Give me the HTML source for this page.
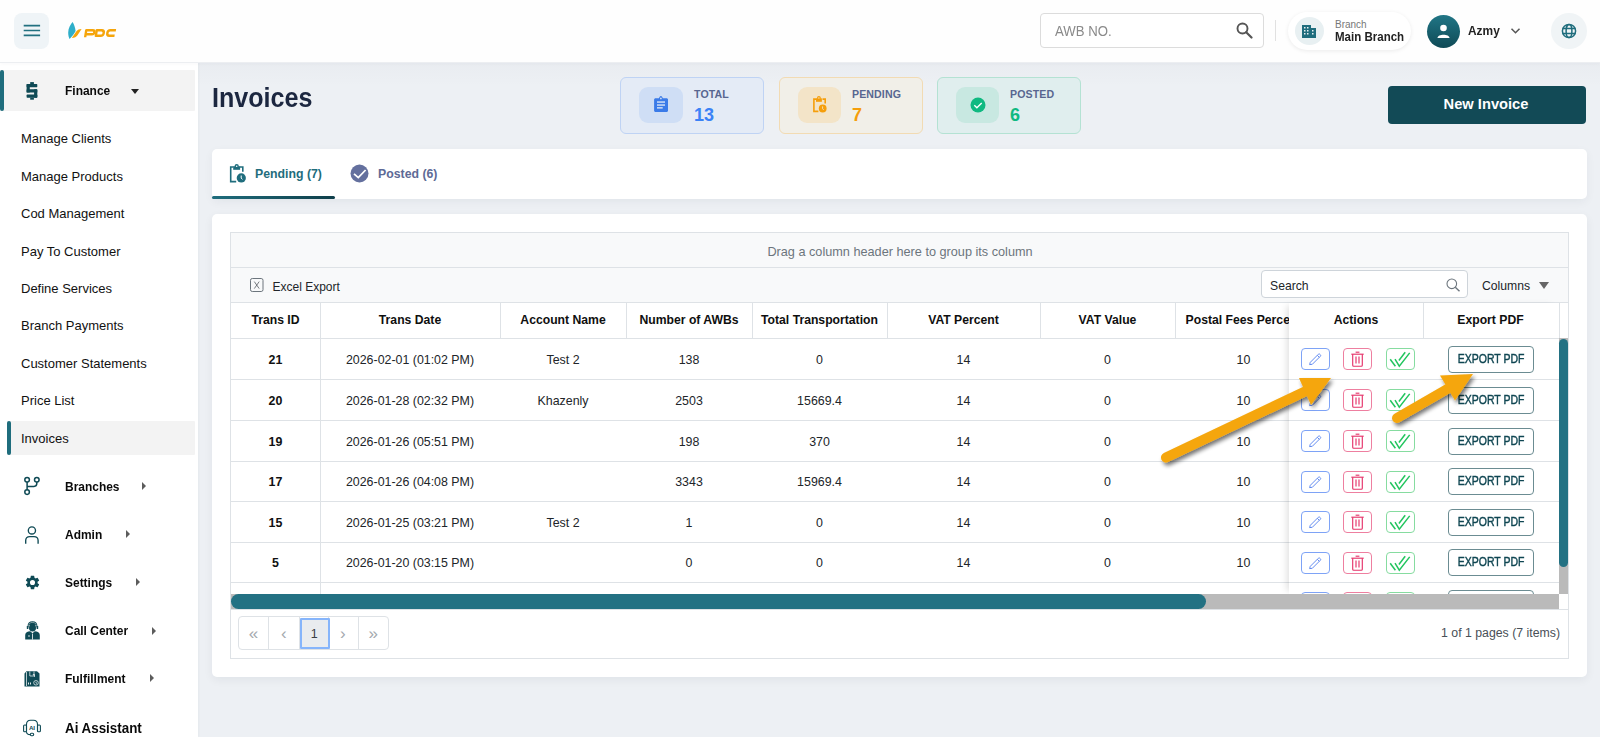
<!DOCTYPE html>
<html><head><meta charset="utf-8">
<style>
*{box-sizing:border-box;margin:0;padding:0}
html,body{width:1600px;height:737px;overflow:hidden}
body{position:relative;background:#edf0f4;font-family:"Liberation Sans",sans-serif;color:#1a1a1a}
.a{position:absolute}
.t{position:absolute;white-space:nowrap;line-height:1}
/* header */
#hdr{left:0;top:0;width:1600px;height:63px;background:#fefefe;border-bottom:1px solid #eceef1;z-index:2;box-shadow:0 1px 4px rgba(30,40,60,0.03)}
#side{left:0;top:62px;width:198px;height:675px;background:#fff;box-shadow:1px 0 2px rgba(30,40,60,0.04)}
.sub{left:21px;font-size:13px;color:#111}
.main{left:65px;font-size:13px;font-weight:700;color:#0a0a0a;transform:scaleX(0.92);transform-origin:0 0}
.tri-r{width:0;height:0;border-top:4.3px solid transparent;border-bottom:4.3px solid transparent;border-left:4.6px solid #5c5c5c}
.card{background:#fff;border-radius:5px}
.gl{background:#dee2e6}
.cell{position:absolute;white-space:nowrap;line-height:1;font-size:12.4px;color:#212529;transform:translateX(-50%)}
.hd{position:absolute;white-space:nowrap;line-height:1;font-size:12.2px;font-weight:700;color:#0f0f0f;transform:translateX(-50%)}
.bt{position:absolute;width:29px;height:22px;border-radius:4px;border:1px solid}
.exp{position:absolute;width:86px;height:27px;border-radius:4px;border:1px solid #6b8c92;color:#0f4652;font-size:12px;font-weight:400;-webkit-text-stroke:0.4px #0f4652;line-height:25px;text-align:center;letter-spacing:0}
</style></head><body>

<!-- HEADER -->
<div id="hdr" class="a">
  <div class="a" style="left:14px;top:13px;width:35px;height:36px;border-radius:8px;background:#eff4f7"></div>
  <svg class="a" style="left:0;top:0" width="60" height="60" viewBox="0 0 60 60"><path d="M23.7 25.6H40.1M23.7 30.5H40.1M23.7 35.3H40.1" stroke="#217080" stroke-width="1.7"/></svg>
  <!-- logo -->
  <svg class="a" style="left:0;top:0" width="130" height="50" viewBox="0 0 130 50">
    <path d="M72.6 22C70.5 24.5 68.3 28 68.2 32.5C68.1 35 68.8 37.5 69.6 39C71.5 37 74.5 33.5 75.6 31C75.2 27.5 74.2 24.5 72.6 22Z" fill="#2eaec9"/>
    <path d="M71.8 38C74.5 37.8 76.5 36.8 77.5 35.2L81.6 28.9C79.2 29 77.6 29.6 76.6 31Z" fill="#f5a50b"/>
    <g transform="translate(100 33) skewX(-9) translate(-100 -33)" fill="none" stroke="#f5a50b" stroke-width="2.4" stroke-linejoin="round">
      <path d="M85.8 37.2V30.2H92.3C94.9 30.2 94.9 34.3 92.3 34.3H86"/>
      <path d="M96.3 30.2H101.2C104.6 30.2 104.6 35.8 101.2 35.8H96.3Z"/>
      <path d="M115.5 30.2H109.8C106.5 30.2 106.5 35.8 109.8 35.8H115"/>
    </g>
  </svg>
  <!-- AWB -->
  <div class="a" style="left:1040px;top:13px;width:224px;height:35px;border:1px solid #dcdcdc;border-radius:4px;background:#fff"></div>
  <div class="t" style="left:1055px;top:24px;font-size:14px;color:#8a8a8a;transform:scaleX(0.94);transform-origin:0 0">AWB NO.</div>
  <svg class="a" style="left:1236px;top:22px" width="17" height="17" viewBox="0 0 17 17"><circle cx="6.5" cy="6.5" r="5" fill="none" stroke="#555" stroke-width="1.9"/><path d="M10.2 10.2 L15.5 15.5" stroke="#555" stroke-width="2.2" stroke-linecap="round"/></svg>
  <div class="a" style="left:1275px;top:20px;width:1px;height:21px;background:#e1e1e1"></div>
  <!-- branch pill -->
  <div class="a" style="left:1288px;top:12px;width:123px;height:38px;border-radius:19px;background:#fff;box-shadow:0 1px 4px rgba(0,0,0,0.08)"></div>
  <div class="a" style="left:1295px;top:17px;width:29px;height:28px;border-radius:50%;background:#e8f0f2"></div>
  <svg class="a" style="left:1302px;top:25px" width="15" height="13" viewBox="0 0 15 13"><path d="M0 0H9V3H14V13H0Z" fill="#1f6d7d"/><g fill="#e8f0f2"><rect x="2" y="2" width="1.5" height="1.5"/><rect x="5" y="2" width="1.5" height="1.5"/><rect x="2" y="5" width="1.5" height="1.5"/><rect x="5" y="5" width="1.5" height="1.5"/><rect x="2" y="8" width="1.5" height="1.5"/><rect x="5" y="8" width="1.5" height="1.5"/><rect x="10" y="5" width="1.5" height="1.5"/><rect x="10" y="8" width="1.5" height="1.5"/></g></svg>
  <div class="t" style="left:1335px;top:20px;font-size:10px;color:#777">Branch</div>
  <div class="t" style="left:1334.5px;top:31px;font-size:12.6px;font-weight:700;color:#222;transform:scaleX(0.915);transform-origin:0 0">Main Branch</div>
  <!-- avatar -->
  <div class="a" style="left:1427px;top:15px;width:33px;height:33px;border-radius:50%;background:linear-gradient(#217686,#0f4a56)"></div>
  <svg class="a" style="left:1435px;top:23px" width="17" height="17" viewBox="0 0 17 17"><circle cx="8.5" cy="5" r="3.3" fill="#fff"/><path d="M2.5 15 C2.5 10.5 14.5 10.5 14.5 15Z" fill="#fff"/></svg>
  <div class="t" style="left:1467.5px;top:25px;font-size:12.8px;font-weight:700;color:#222;transform:scaleX(0.93);transform-origin:0 0">Azmy</div>
  <svg class="a" style="left:1510px;top:27px" width="11" height="8" viewBox="0 0 11 8"><path d="M1.5 1.8 L5.5 5.8 L9.5 1.8" fill="none" stroke="#555" stroke-width="1.5"/></svg>
  <!-- globe -->
  <div class="a" style="left:1551px;top:13px;width:36px;height:36px;border-radius:50%;background:#f0f4f6"></div>
  <svg class="a" style="left:1561px;top:23px" width="16" height="16" viewBox="0 0 16 16"><g fill="none" stroke="#1f6d7d" stroke-width="1.5"><circle cx="8" cy="8" r="6.6"/><ellipse cx="8" cy="8" rx="2.9" ry="6.6"/><path d="M1.5 5.6H14.5M1.5 10.4H14.5"/></g></svg>
</div>

<!-- SIDEBAR -->
<div id="side" class="a">
  <div class="a" style="left:0;top:8px;width:195px;height:41px;background:#f3f3f3;border-radius:1px"></div>
  <div class="a" style="left:0;top:8px;width:4px;height:41px;background:#1f6d7d;border-radius:2px"></div>
  <svg class="a" style="left:0;top:-62px" width="60" height="120" viewBox="0 0 60 120"><g fill="#0f4a55"><rect x="30.2" y="82.1" width="3.7" height="2.2"/><rect x="26.6" y="84.1" width="10.7" height="3.1" rx="0.6"/><rect x="26.6" y="84.1" width="3.2" height="8.5" rx="0.6"/><rect x="26.6" y="89.3" width="10.7" height="3.3" rx="0.6"/><rect x="34.1" y="89.3" width="3.2" height="8.4" rx="0.6"/><rect x="26.6" y="94.6" width="10.7" height="3.1" rx="0.6"/><rect x="30.2" y="97.5" width="3.7" height="2.2"/></g></svg>
  <div class="t main" style="top:22px">Finance</div>
  <div class="a" style="left:131px;top:27px;width:0;height:0;border-left:4.5px solid transparent;border-right:4.5px solid transparent;border-top:5px solid #222"></div>

  <div class="t sub" style="top:70px">Manage Clients</div>
  <div class="t sub" style="top:108px">Manage Products</div>
  <div class="t sub" style="top:145px">Cod Management</div>
  <div class="t sub" style="top:183px">Pay To Customer</div>
  <div class="t sub" style="top:220px">Define Services</div>
  <div class="t sub" style="top:257px">Branch Payments</div>
  <div class="t sub" style="top:295px">Customer Statements</div>
  <div class="t sub" style="top:332px">Price List</div>
  <div class="a" style="left:7px;top:359px;width:188px;height:34px;background:#f3f3f3;border-radius:1px"></div>
  <div class="a" style="left:7px;top:359px;width:4px;height:34px;background:#1f6d7d;border-radius:2px"></div>
  <div class="t sub" style="top:370px">Invoices</div>

  <!-- Branches -->
  <svg class="a" style="left:0;top:-62px" width="60" height="737" viewBox="0 0 60 737"><g fill="none" stroke="#0f4a55" stroke-width="1.5"><circle cx="27.1" cy="479.8" r="2.3"/><circle cx="36.8" cy="479.8" r="2.3"/><circle cx="27.1" cy="492.1" r="2.3"/><path d="M27.1 482.1V489.8M27.1 486.4H34C35.8 486.4 36.8 485.4 36.8 483.6V482.1"/></g>
  <g fill="none" stroke="#0f4a55" stroke-width="1.35"><circle cx="31.9" cy="530.4" r="3.6"/><path d="M25.7 543.8V540.6C25.7 538.1 27.3 536.6 29.8 536.6H34C36.5 536.6 38.1 538.1 38.1 540.6V543.8"/></g>
  <g fill="none" stroke="#0f4a55" stroke-width="1.1"><path d="M26.5 731.5V724.5C26.5 722 28.2 720.3 30.5 720.3H33.5C35.8 720.3 37.5 722 37.5 724.5V731.5"/><rect x="23.6" y="725" width="2.9" height="6.7" rx="1"/><rect x="37.5" y="725" width="2.9" height="6.7" rx="1"/><path d="M26.5 731.7C26.5 733.5 28 734.6 30.3 734.6"/><rect x="30.3" y="733.2" width="3.4" height="2.6" rx="1.2"/></g>
  <text x="32" y="729.8" text-anchor="middle" font-family="Liberation Sans" font-size="6.2" font-weight="700" fill="#0f4a55">AI</text>
  </svg>
  <div class="t main" style="top:417.5px">Branches</div>
  <div class="a tri-r" style="left:142px;top:420px"></div>
  <div class="t main" style="top:465.5px">Admin</div>
  <div class="a tri-r" style="left:126px;top:468px"></div>
  <!-- Settings -->
  <svg class="a" style="left:24px;top:512px" width="17" height="17" viewBox="0 0 24 24"><path fill="#0f4a55" d="M19.14 12.94c.04-.3.06-.61.06-.94 0-.32-.02-.64-.07-.94l2.03-1.58a.49.49 0 0 0 .12-.61l-1.92-3.32a.49.49 0 0 0-.59-.22l-2.39.96c-.5-.38-1.03-.7-1.62-.94l-.36-2.54a.48.48 0 0 0-.48-.41h-3.840c-.24 0-.43.17-.47.41l-.36 2.54c-.59.24-1.13.57-1.62.94l-2.39-.96a.48.48 0 0 0-.59.22L2.74 8.87c-.12.21-.08.47.12.61l2.030 1.58c-.05.3-.09.63-.09.94s.02.64.07.94l-2.03 1.58a.49.49 0 0 0-.12.61l1.92 3.32c.12.22.37.29.59.22l2.39-.96c.5.38 1.03.7 1.62.94l.36 2.54c.05.24.24.41.48.41h3.84c.24 0 .44-.17.47-.41l.36-2.54c.59-.24 1.13-.56 1.62-.94l2.39.96c.22.08.47 0 .59-.22l1.92-3.32c.12-.22.07-.47-.12-.61l-2.01-1.58zM12 15.6A3.6 3.6 0 1 1 12 8.4a3.6 3.6 0 0 1 0 7.2z"/></svg>
  <div class="t main" style="top:513.5px">Settings</div>
  <div class="a tri-r" style="left:136px;top:516px"></div>
  <!-- Call Center -->
  <svg class="a" style="left:25px;top:559px" width="15" height="19" viewBox="0 0 15 19"><g fill="#0f4a55"><path d="M7.5 0.2C4.3 0.2 2.6 2.2 2.6 4.8V6.2H3.6V4.8C3.6 2.8 5.2 1.3 7.5 1.3S11.4 2.8 11.4 4.8V6.2H12.4V4.8C12.4 2.2 10.7 0.2 7.5 0.2Z"/><path d="M3.8 4.2C4.3 2.2 5.8 1.4 7.5 1.4S10.7 2.2 11.2 4.2Z"/><ellipse cx="7.5" cy="6.8" rx="3.5" ry="3.8"/><rect x="1.8" y="5" width="1.6" height="3" rx="0.6"/><rect x="11.6" y="5" width="1.6" height="3" rx="0.6"/><path d="M0.2 18.5V14.2C0.2 12.2 1.6 11 3.4 10.6L5.2 10.2L7.5 12.3L9.8 10.2L11.6 10.6C13.4 11 14.8 12.2 14.8 14.2V18.5Z"/></g><g fill="#fff"><rect x="7.1" y="12.6" width="0.8" height="6"/><rect x="3" y="14.6" width="2" height="0.8"/></g></svg>
  <div class="t main" style="top:562px">Call Center</div>
  <div class="a tri-r" style="left:152px;top:564.5px"></div>
  <!-- Fulfillment -->
  <svg class="a" style="left:24px;top:609px" width="16" height="16" viewBox="0 0 16 16"><path d="M0.5 2.5L2.5 0.3H13L15.5 2.5V15.5H0.5Z" fill="#0f4a55"/><g fill="none" stroke="#fff" stroke-width="0.7"><path d="M2.5 1V15M5.8 0.5V5H10V0.5"/><circle cx="12" cy="11.8" r="2.3"/><path d="M12 10.8V12L12.8 12.6"/><path d="M8.8 3.5H10.5V6"/></g><g fill="#fff"><rect x="4" y="11.5" width="0.9" height="2"/><rect x="6" y="11.5" width="0.9" height="2"/></g></svg>
  <div class="t main" style="top:610px">Fulfillment</div>
  <div class="a tri-r" style="left:150px;top:612px"></div>
  <div class="t main" style="top:659px;font-size:14px;transform:scaleX(0.955)">Ai Assistant</div>
</div>

<!-- MAIN -->
<div id="main">
  <div class="a" style="left:198px;top:63px;width:1402px;height:24px;background:linear-gradient(rgba(40,50,70,0.018),rgba(40,50,70,0))"></div>
  <div class="t" style="left:212px;top:85px;font-size:27px;font-weight:700;color:#1c2740;transform:scaleX(0.93);transform-origin:0 0">Invoices</div>
  <!-- stat cards -->
  <div class="a" style="left:620px;top:77px;width:144px;height:57px;border:1px solid #bfd3f4;border-radius:6px;background:#e4ebf6"></div>
  <div class="a" style="left:639px;top:87px;width:44px;height:36px;border-radius:9px;background:#cfdef5"></div>
  <svg class="a" style="left:646px;top:90px" width="30" height="30" viewBox="0 0 30 30"><path d="M9 8.3H13C13.3 7 14 6 14.9 6S16.5 7 16.8 8.3H21.1L22 9.2V21.1L21.1 22H9L8.1 21.1V9.2Z" fill="#3b7be8"/><g fill="#cfdef5"><circle cx="14.9" cy="8.4" r="0.9"/><rect x="11" y="11.3" width="8" height="1.5"/><rect x="11" y="14.3" width="8" height="1.5"/><rect x="11" y="17.1" width="5.7" height="1.5"/></g></svg>
  <div class="t" style="left:694px;top:89px;font-size:10.6px;font-weight:700;color:#586690;letter-spacing:0.1px">TOTAL</div>
  <div class="t" style="left:694px;top:106px;font-size:18px;font-weight:700;color:#3b82f6">13</div>

  <div class="a" style="left:779px;top:77px;width:144px;height:57px;border:1px solid #f2dbb3;border-radius:6px;background:#f1efe8"></div>
  <div class="a" style="left:798px;top:87px;width:43px;height:36px;border-radius:9px;background:#f3e4c8"></div>
  <svg class="a" style="left:805px;top:90px" width="30" height="30" viewBox="0 0 30 30"><g fill="none" stroke="#f59e0b" stroke-width="1.6"><path d="M11.5 9.1H8.9V21.4H13.4"/><path d="M17.5 9.1H20.2V13.6"/></g><path d="M11 8.3H16.9V11.8H11Z" fill="#f59e0b"/><circle cx="13.9" cy="7.8" r="1.9" fill="#f59e0b"/><circle cx="13.9" cy="8" r="0.7" fill="#f3e4c8"/><circle cx="17.7" cy="18.5" r="3.9" fill="#f59e0b"/><path d="M17.6 16.4V18.6L18.6 19.8" stroke="#f3e4c8" stroke-width="0.9" fill="none"/></svg>
  <div class="t" style="left:852px;top:89px;font-size:10.6px;font-weight:700;color:#586690;letter-spacing:0.1px">PENDING</div>
  <div class="t" style="left:852px;top:106px;font-size:18px;font-weight:700;color:#f59e0b">7</div>

  <div class="a" style="left:937px;top:77px;width:144px;height:57px;border:1px solid #b4e2d3;border-radius:6px;background:#e0eeee"></div>
  <div class="a" style="left:956px;top:87px;width:43px;height:36px;border-radius:9px;background:#c8e8e1"></div>
  <svg class="a" style="left:970px;top:97px" width="16" height="16" viewBox="0 0 16 16"><circle cx="8" cy="8" r="7.5" fill="#10b981"/><path d="M4.3 8.3L6.9 10.8L11.7 6" fill="none" stroke="#fff" stroke-width="1.35"/></svg>
  <div class="t" style="left:1010px;top:89px;font-size:10.6px;font-weight:700;color:#586690;letter-spacing:0.1px">POSTED</div>
  <div class="t" style="left:1010px;top:106px;font-size:18px;font-weight:700;color:#10b981">6</div>

  <!-- new invoice -->
  <div class="a" style="left:1388px;top:86px;width:198px;height:38px;border-radius:4px;background:#124a56"></div>
  <div class="t" style="left:1387px;width:198px;text-align:center;top:97px;font-size:14.7px;font-weight:700;color:#fff">New Invoice</div>

  <!-- tabs card -->
  <div class="a card" style="left:212px;top:149px;width:1375px;height:50px;box-shadow:0 3px 10px rgba(20,30,50,0.05)"></div>
  <div class="a" style="left:212px;top:196px;width:123px;height:3px;border-radius:2px;background:linear-gradient(90deg,#1f6d7d,#0f3f4a)"></div>
  <svg class="a" style="left:222px;top:158px" width="30" height="30" viewBox="0 0 30 30"><g fill="none" stroke="#1f6d7d" stroke-width="1.6"><path d="M11.5 9H8.7V23.6H14.2"/><path d="M17.8 9H20.8V13.8"/></g><path d="M11.2 8.2H18.1V11.8H11.2Z" fill="#1f6d7d"/><circle cx="14.7" cy="8" r="2.1" fill="#1f6d7d"/><circle cx="14.7" cy="8.2" r="0.8" fill="#fff"/><circle cx="19.3" cy="19.9" r="4.6" fill="#1f6d7d"/><path d="M19.2 17.5V20.1L20.4 21.4" stroke="#fff" stroke-width="1" fill="none"/></svg>
  <div class="t" style="left:255px;top:168px;font-size:12.3px;font-weight:700;color:#1f6d7d">Pending (7)</div>
  <svg class="a" style="left:350px;top:164px" width="19" height="19" viewBox="0 0 19 19"><circle cx="9.5" cy="9.5" r="9" fill="#64709e"/><path d="M4 9.9L8.3 13.6L15.6 6" fill="none" stroke="#fff" stroke-width="1.8"/></svg>
  <div class="t" style="left:378px;top:168px;font-size:12.3px;font-weight:700;color:#5e6a96">Posted (6)</div>

  <!-- grid card -->
  <div class="a card" style="left:212px;top:214px;width:1375px;height:463px;box-shadow:0 3px 10px rgba(20,30,50,0.06)"></div>
  <!--GRID-->
<div class="a" style="left:230px;top:232px;width:1339px;height:427px;border:1px solid #dee2e6;background:#fff"></div>
<div class="a" style="left:231px;top:233px;width:1337px;height:34px;background:#f8f9fa"></div>
<div class="a gl" style="left:231px;top:267px;width:1337px;height:1px"></div>
<div class="t" style="left:900px;top:246px;font-size:12.7px;color:#6c757d;transform:translateX(-50%)">Drag a column header here to group its column</div>
<div class="a" style="left:231px;top:268px;width:1337px;height:34px;background:#f8f9fa"></div>
<div class="a gl" style="left:231px;top:302px;width:1337px;height:1px"></div>
<svg class="a" style="left:249px;top:277px" width="16" height="16" viewBox="0 0 16 16"><rect x="1.5" y="1.5" width="12.5" height="13" rx="1.8" fill="none" stroke="#6c757d" stroke-width="1"/><path d="M5.3 4.6L10.2 11.6M10.2 4.6L5.3 11.6" stroke="#555b61" stroke-width="0.8"/></svg>
<div class="t" style="left:272.5px;top:281px;font-size:12px;color:#212529">Excel Export</div>
<div class="a" style="left:1261px;top:270px;width:207px;height:28px;border:1px solid #ced4da;border-radius:4px;background:#fff"></div>
<div class="t" style="left:1270px;top:280px;font-size:12.2px;color:#212529">Search</div>
<svg class="a" style="left:1446px;top:278px" width="15" height="14" viewBox="0 0 15 14"><circle cx="5.8" cy="5.8" r="4.8" fill="none" stroke="#6c757d" stroke-width="1.1"/><path d="M9.3 9.3L13.5 13.3" stroke="#6c757d" stroke-width="1.4"/></svg>
<div class="t" style="left:1482px;top:280px;font-size:12.2px;color:#212529">Columns</div>
<div class="a" style="left:1539px;top:282px;width:0;height:0;border-left:5.5px solid transparent;border-right:5.5px solid transparent;border-top:7px solid #666"></div>
<div class="hd" style="left:275.5px;top:314px">Trans ID</div>
<div class="hd" style="left:410.0px;top:314px">Trans Date</div>
<div class="hd" style="left:563.0px;top:314px">Account Name</div>
<div class="hd" style="left:689.0px;top:314px">Number of AWBs</div>
<div class="hd" style="left:819.5px;top:314px">Total Transportation</div>
<div class="hd" style="left:963.5px;top:314px">VAT Percent</div>
<div class="hd" style="left:1107.5px;top:314px">VAT Value</div>
<div class="hd" style="left:1243.5px;top:314px">Postal Fees Percent</div>
<div class="a gl" style="left:320px;top:303px;width:1px;height:35px"></div>
<div class="a gl" style="left:500px;top:303px;width:1px;height:35px"></div>
<div class="a gl" style="left:626px;top:303px;width:1px;height:35px"></div>
<div class="a gl" style="left:752px;top:303px;width:1px;height:35px"></div>
<div class="a gl" style="left:887px;top:303px;width:1px;height:35px"></div>
<div class="a gl" style="left:1040px;top:303px;width:1px;height:35px"></div>
<div class="a gl" style="left:1175px;top:303px;width:1px;height:35px"></div>
<div class="a gl" style="left:231px;top:338px;width:1328px;height:1px"></div>
<div class="cell" style="left:275.5px;top:353.9px;font-weight:700;color:#111;">21</div>
<div class="cell" style="left:410.0px;top:353.9px;">2026-02-01 (01:02 PM)</div>
<div class="cell" style="left:563.0px;top:353.9px;">Test 2</div>
<div class="cell" style="left:689.0px;top:353.9px;">138</div>
<div class="cell" style="left:819.5px;top:353.9px;">0</div>
<div class="cell" style="left:963.5px;top:353.9px;">14</div>
<div class="cell" style="left:1107.5px;top:353.9px;">0</div>
<div class="cell" style="left:1243.5px;top:353.9px;">10</div>
<div class="a gl" style="left:231px;top:379px;width:1328px;height:1px"></div>
<div class="cell" style="left:275.5px;top:394.9px;font-weight:700;color:#111;">20</div>
<div class="cell" style="left:410.0px;top:394.9px;">2026-01-28 (02:32 PM)</div>
<div class="cell" style="left:563.0px;top:394.9px;">Khazenly</div>
<div class="cell" style="left:689.0px;top:394.9px;">2503</div>
<div class="cell" style="left:819.5px;top:394.9px;">15669.4</div>
<div class="cell" style="left:963.5px;top:394.9px;">14</div>
<div class="cell" style="left:1107.5px;top:394.9px;">0</div>
<div class="cell" style="left:1243.5px;top:394.9px;">10</div>
<div class="a gl" style="left:231px;top:420px;width:1328px;height:1px"></div>
<div class="cell" style="left:275.5px;top:435.9px;font-weight:700;color:#111;">19</div>
<div class="cell" style="left:410.0px;top:435.9px;">2026-01-26 (05:51 PM)</div>
<div class="cell" style="left:689.0px;top:435.9px;">198</div>
<div class="cell" style="left:819.5px;top:435.9px;">370</div>
<div class="cell" style="left:963.5px;top:435.9px;">14</div>
<div class="cell" style="left:1107.5px;top:435.9px;">0</div>
<div class="cell" style="left:1243.5px;top:435.9px;">10</div>
<div class="a gl" style="left:231px;top:461px;width:1328px;height:1px"></div>
<div class="cell" style="left:275.5px;top:476.4px;font-weight:700;color:#111;">17</div>
<div class="cell" style="left:410.0px;top:476.4px;">2026-01-26 (04:08 PM)</div>
<div class="cell" style="left:689.0px;top:476.4px;">3343</div>
<div class="cell" style="left:819.5px;top:476.4px;">15969.4</div>
<div class="cell" style="left:963.5px;top:476.4px;">14</div>
<div class="cell" style="left:1107.5px;top:476.4px;">0</div>
<div class="cell" style="left:1243.5px;top:476.4px;">10</div>
<div class="a gl" style="left:231px;top:501px;width:1328px;height:1px"></div>
<div class="cell" style="left:275.5px;top:516.9px;font-weight:700;color:#111;">15</div>
<div class="cell" style="left:410.0px;top:516.9px;">2026-01-25 (03:21 PM)</div>
<div class="cell" style="left:563.0px;top:516.9px;">Test 2</div>
<div class="cell" style="left:689.0px;top:516.9px;">1</div>
<div class="cell" style="left:819.5px;top:516.9px;">0</div>
<div class="cell" style="left:963.5px;top:516.9px;">14</div>
<div class="cell" style="left:1107.5px;top:516.9px;">0</div>
<div class="cell" style="left:1243.5px;top:516.9px;">10</div>
<div class="a gl" style="left:231px;top:542px;width:1328px;height:1px"></div>
<div class="cell" style="left:275.5px;top:557.4px;font-weight:700;color:#111;">5</div>
<div class="cell" style="left:410.0px;top:557.4px;">2026-01-20 (03:15 PM)</div>
<div class="cell" style="left:689.0px;top:557.4px;">0</div>
<div class="cell" style="left:819.5px;top:557.4px;">0</div>
<div class="cell" style="left:963.5px;top:557.4px;">14</div>
<div class="cell" style="left:1107.5px;top:557.4px;">0</div>
<div class="cell" style="left:1243.5px;top:557.4px;">10</div>
<div class="a gl" style="left:231px;top:582px;width:1328px;height:1px"></div>
<div class="a gl" style="left:320px;top:339px;width:1px;height:255px"></div>
<div class="a" style="left:1289px;top:303px;width:270px;height:291px;background:#fff;box-shadow:-5px 0 7px -3px rgba(0,0,0,0.13)"></div>
<div class="a gl" style="left:1289px;top:338px;width:270px;height:1px"></div>
<div class="a gl" style="left:1423px;top:303px;width:1px;height:35px"></div>
<div class="a gl" style="left:1559px;top:303px;width:1px;height:35px"></div>
<div class="hd" style="left:1356px;top:314px">Actions</div>
<div class="hd" style="left:1490.5px;top:314px">Export PDF</div>
<div class="bt" style="left:1301px;top:348.0px;border-color:#7ea3f6"><svg width="29" height="22" viewBox="0 0 29 22" style="position:absolute;left:-1px;top:-1px"><path d="M8.6 16.6L9.3 14.3L17.3 6.3C17.8 5.8 18.4 5.8 18.9 6.3L19.3 6.7C19.8 7.2 19.8 7.8 19.3 8.3L11.3 16.3Z M16.3 7.3L18.3 9.3" fill="none" stroke="#5b86ef" stroke-width="0.95" stroke-linejoin="round"/></svg></div>
<div class="bt" style="left:1343px;top:348.0px;border-color:#ee7fa0"><svg width="29" height="22" viewBox="0 0 29 22" style="position:absolute;left:-1px;top:-1px"><g fill="none" stroke="#e5336a" stroke-width="1.15"><path d="M8.3 6.2H20.7"/><path d="M12.6 4.2H16.4"/><path d="M9.7 6.2V17.2C9.7 17.8 10.1 18.2 10.7 18.2H18.3C18.9 18.2 19.3 17.8 19.3 17.2V6.2"/><path d="M13 8.6V15.6M16 8.6V15.6"/></g></svg></div>
<div class="bt" style="left:1385.5px;top:348.0px;border-color:#86dca0"><svg width="29" height="22" viewBox="0 0 29 22" style="position:absolute;left:-1px;top:-1px"><g fill="none" stroke="#22c55e" stroke-width="1.5"><path d="M4.2 11.2L9.4 18.2"/><path d="M12.9 12.5L19.2 4.3"/><path d="M9 11.2L13.3 18.2L23.7 4.9"/></g></svg></div>
<div class="exp" style="left:1448px;top:345.6px"><span style="display:inline-block;transform:scaleX(0.875)">EXPORT PDF</span></div>
<div class="a gl" style="left:1289px;top:379px;width:270px;height:1px"></div>
<div class="bt" style="left:1301px;top:389.0px;border-color:#7ea3f6"><svg width="29" height="22" viewBox="0 0 29 22" style="position:absolute;left:-1px;top:-1px"><path d="M8.6 16.6L9.3 14.3L17.3 6.3C17.8 5.8 18.4 5.8 18.9 6.3L19.3 6.7C19.8 7.2 19.8 7.8 19.3 8.3L11.3 16.3Z M16.3 7.3L18.3 9.3" fill="none" stroke="#5b86ef" stroke-width="0.95" stroke-linejoin="round"/></svg></div>
<div class="bt" style="left:1343px;top:389.0px;border-color:#ee7fa0"><svg width="29" height="22" viewBox="0 0 29 22" style="position:absolute;left:-1px;top:-1px"><g fill="none" stroke="#e5336a" stroke-width="1.15"><path d="M8.3 6.2H20.7"/><path d="M12.6 4.2H16.4"/><path d="M9.7 6.2V17.2C9.7 17.8 10.1 18.2 10.7 18.2H18.3C18.9 18.2 19.3 17.8 19.3 17.2V6.2"/><path d="M13 8.6V15.6M16 8.6V15.6"/></g></svg></div>
<div class="bt" style="left:1385.5px;top:389.0px;border-color:#86dca0"><svg width="29" height="22" viewBox="0 0 29 22" style="position:absolute;left:-1px;top:-1px"><g fill="none" stroke="#22c55e" stroke-width="1.5"><path d="M4.2 11.2L9.4 18.2"/><path d="M12.9 12.5L19.2 4.3"/><path d="M9 11.2L13.3 18.2L23.7 4.9"/></g></svg></div>
<div class="exp" style="left:1448px;top:386.6px"><span style="display:inline-block;transform:scaleX(0.875)">EXPORT PDF</span></div>
<div class="a gl" style="left:1289px;top:420px;width:270px;height:1px"></div>
<div class="bt" style="left:1301px;top:430.0px;border-color:#7ea3f6"><svg width="29" height="22" viewBox="0 0 29 22" style="position:absolute;left:-1px;top:-1px"><path d="M8.6 16.6L9.3 14.3L17.3 6.3C17.8 5.8 18.4 5.8 18.9 6.3L19.3 6.7C19.8 7.2 19.8 7.8 19.3 8.3L11.3 16.3Z M16.3 7.3L18.3 9.3" fill="none" stroke="#5b86ef" stroke-width="0.95" stroke-linejoin="round"/></svg></div>
<div class="bt" style="left:1343px;top:430.0px;border-color:#ee7fa0"><svg width="29" height="22" viewBox="0 0 29 22" style="position:absolute;left:-1px;top:-1px"><g fill="none" stroke="#e5336a" stroke-width="1.15"><path d="M8.3 6.2H20.7"/><path d="M12.6 4.2H16.4"/><path d="M9.7 6.2V17.2C9.7 17.8 10.1 18.2 10.7 18.2H18.3C18.9 18.2 19.3 17.8 19.3 17.2V6.2"/><path d="M13 8.6V15.6M16 8.6V15.6"/></g></svg></div>
<div class="bt" style="left:1385.5px;top:430.0px;border-color:#86dca0"><svg width="29" height="22" viewBox="0 0 29 22" style="position:absolute;left:-1px;top:-1px"><g fill="none" stroke="#22c55e" stroke-width="1.5"><path d="M4.2 11.2L9.4 18.2"/><path d="M12.9 12.5L19.2 4.3"/><path d="M9 11.2L13.3 18.2L23.7 4.9"/></g></svg></div>
<div class="exp" style="left:1448px;top:427.6px"><span style="display:inline-block;transform:scaleX(0.875)">EXPORT PDF</span></div>
<div class="a gl" style="left:1289px;top:461px;width:270px;height:1px"></div>
<div class="bt" style="left:1301px;top:470.5px;border-color:#7ea3f6"><svg width="29" height="22" viewBox="0 0 29 22" style="position:absolute;left:-1px;top:-1px"><path d="M8.6 16.6L9.3 14.3L17.3 6.3C17.8 5.8 18.4 5.8 18.9 6.3L19.3 6.7C19.8 7.2 19.8 7.8 19.3 8.3L11.3 16.3Z M16.3 7.3L18.3 9.3" fill="none" stroke="#5b86ef" stroke-width="0.95" stroke-linejoin="round"/></svg></div>
<div class="bt" style="left:1343px;top:470.5px;border-color:#ee7fa0"><svg width="29" height="22" viewBox="0 0 29 22" style="position:absolute;left:-1px;top:-1px"><g fill="none" stroke="#e5336a" stroke-width="1.15"><path d="M8.3 6.2H20.7"/><path d="M12.6 4.2H16.4"/><path d="M9.7 6.2V17.2C9.7 17.8 10.1 18.2 10.7 18.2H18.3C18.9 18.2 19.3 17.8 19.3 17.2V6.2"/><path d="M13 8.6V15.6M16 8.6V15.6"/></g></svg></div>
<div class="bt" style="left:1385.5px;top:470.5px;border-color:#86dca0"><svg width="29" height="22" viewBox="0 0 29 22" style="position:absolute;left:-1px;top:-1px"><g fill="none" stroke="#22c55e" stroke-width="1.5"><path d="M4.2 11.2L9.4 18.2"/><path d="M12.9 12.5L19.2 4.3"/><path d="M9 11.2L13.3 18.2L23.7 4.9"/></g></svg></div>
<div class="exp" style="left:1448px;top:468.1px"><span style="display:inline-block;transform:scaleX(0.875)">EXPORT PDF</span></div>
<div class="a gl" style="left:1289px;top:501px;width:270px;height:1px"></div>
<div class="bt" style="left:1301px;top:511.0px;border-color:#7ea3f6"><svg width="29" height="22" viewBox="0 0 29 22" style="position:absolute;left:-1px;top:-1px"><path d="M8.6 16.6L9.3 14.3L17.3 6.3C17.8 5.8 18.4 5.8 18.9 6.3L19.3 6.7C19.8 7.2 19.8 7.8 19.3 8.3L11.3 16.3Z M16.3 7.3L18.3 9.3" fill="none" stroke="#5b86ef" stroke-width="0.95" stroke-linejoin="round"/></svg></div>
<div class="bt" style="left:1343px;top:511.0px;border-color:#ee7fa0"><svg width="29" height="22" viewBox="0 0 29 22" style="position:absolute;left:-1px;top:-1px"><g fill="none" stroke="#e5336a" stroke-width="1.15"><path d="M8.3 6.2H20.7"/><path d="M12.6 4.2H16.4"/><path d="M9.7 6.2V17.2C9.7 17.8 10.1 18.2 10.7 18.2H18.3C18.9 18.2 19.3 17.8 19.3 17.2V6.2"/><path d="M13 8.6V15.6M16 8.6V15.6"/></g></svg></div>
<div class="bt" style="left:1385.5px;top:511.0px;border-color:#86dca0"><svg width="29" height="22" viewBox="0 0 29 22" style="position:absolute;left:-1px;top:-1px"><g fill="none" stroke="#22c55e" stroke-width="1.5"><path d="M4.2 11.2L9.4 18.2"/><path d="M12.9 12.5L19.2 4.3"/><path d="M9 11.2L13.3 18.2L23.7 4.9"/></g></svg></div>
<div class="exp" style="left:1448px;top:508.6px"><span style="display:inline-block;transform:scaleX(0.875)">EXPORT PDF</span></div>
<div class="a gl" style="left:1289px;top:542px;width:270px;height:1px"></div>
<div class="bt" style="left:1301px;top:551.5px;border-color:#7ea3f6"><svg width="29" height="22" viewBox="0 0 29 22" style="position:absolute;left:-1px;top:-1px"><path d="M8.6 16.6L9.3 14.3L17.3 6.3C17.8 5.8 18.4 5.8 18.9 6.3L19.3 6.7C19.8 7.2 19.8 7.8 19.3 8.3L11.3 16.3Z M16.3 7.3L18.3 9.3" fill="none" stroke="#5b86ef" stroke-width="0.95" stroke-linejoin="round"/></svg></div>
<div class="bt" style="left:1343px;top:551.5px;border-color:#ee7fa0"><svg width="29" height="22" viewBox="0 0 29 22" style="position:absolute;left:-1px;top:-1px"><g fill="none" stroke="#e5336a" stroke-width="1.15"><path d="M8.3 6.2H20.7"/><path d="M12.6 4.2H16.4"/><path d="M9.7 6.2V17.2C9.7 17.8 10.1 18.2 10.7 18.2H18.3C18.9 18.2 19.3 17.8 19.3 17.2V6.2"/><path d="M13 8.6V15.6M16 8.6V15.6"/></g></svg></div>
<div class="bt" style="left:1385.5px;top:551.5px;border-color:#86dca0"><svg width="29" height="22" viewBox="0 0 29 22" style="position:absolute;left:-1px;top:-1px"><g fill="none" stroke="#22c55e" stroke-width="1.5"><path d="M4.2 11.2L9.4 18.2"/><path d="M12.9 12.5L19.2 4.3"/><path d="M9 11.2L13.3 18.2L23.7 4.9"/></g></svg></div>
<div class="exp" style="left:1448px;top:549.1px"><span style="display:inline-block;transform:scaleX(0.875)">EXPORT PDF</span></div>
<div class="a gl" style="left:1289px;top:582px;width:270px;height:1px"></div>
<div class="bt" style="left:1301px;top:591.9px;border-color:#7ea3f6"><svg width="29" height="22" viewBox="0 0 29 22" style="position:absolute;left:-1px;top:-1px"><path d="M8.6 16.6L9.3 14.3L17.3 6.3C17.8 5.8 18.4 5.8 18.9 6.3L19.3 6.7C19.8 7.2 19.8 7.8 19.3 8.3L11.3 16.3Z M16.3 7.3L18.3 9.3" fill="none" stroke="#5b86ef" stroke-width="0.95" stroke-linejoin="round"/></svg></div>
<div class="bt" style="left:1343px;top:591.9px;border-color:#ee7fa0"><svg width="29" height="22" viewBox="0 0 29 22" style="position:absolute;left:-1px;top:-1px"><g fill="none" stroke="#e5336a" stroke-width="1.15"><path d="M8.3 6.2H20.7"/><path d="M12.6 4.2H16.4"/><path d="M9.7 6.2V17.2C9.7 17.8 10.1 18.2 10.7 18.2H18.3C18.9 18.2 19.3 17.8 19.3 17.2V6.2"/><path d="M13 8.6V15.6M16 8.6V15.6"/></g></svg></div>
<div class="bt" style="left:1385.5px;top:591.9px;border-color:#86dca0"><svg width="29" height="22" viewBox="0 0 29 22" style="position:absolute;left:-1px;top:-1px"><g fill="none" stroke="#22c55e" stroke-width="1.5"><path d="M4.2 11.2L9.4 18.2"/><path d="M12.9 12.5L19.2 4.3"/><path d="M9 11.2L13.3 18.2L23.7 4.9"/></g></svg></div>
<div class="exp" style="left:1448px;top:589.5px"><span style="display:inline-block;transform:scaleX(0.875)">EXPORT PDF</span></div>
<div class="a" style="left:1560px;top:303px;width:8px;height:35px;background:#fff"></div>
<div class="a" style="left:1559px;top:338px;width:9px;height:256px;background:#bababa"></div>
<div class="a" style="left:1559px;top:339px;width:9px;height:228px;border-radius:5px;background:#237183"></div>
<div class="a" style="left:231px;top:594px;width:1328px;height:15px;background:#bababa"></div>
<div class="a" style="left:231px;top:594px;width:975px;height:15px;border-radius:8px;background:#237183"></div>
<div class="a" style="left:1559px;top:594px;width:9px;height:15px;background:#fff"></div>
<div class="a gl" style="left:231px;top:609px;width:1337px;height:1px"></div>
<div class="a" style="left:231px;top:610px;width:1337px;height:48px;background:#fff"></div>
<div class="a" style="left:238px;top:616px;width:151px;height:34px;border:1px solid #dee2e6;border-radius:4px;background:#fff"></div>
<div class="a gl" style="left:268px;top:617px;width:1px;height:32px"></div>
<div class="a gl" style="left:299px;top:617px;width:1px;height:32px"></div>
<div class="a gl" style="left:328px;top:617px;width:1px;height:32px"></div>
<div class="a gl" style="left:358px;top:617px;width:1px;height:32px"></div>
<div class="a" style="left:299.5px;top:618px;width:30px;height:31px;border:2px solid #86b5fb;border-radius:1px;background:#e9ecef"></div>
<div class="t" style="left:314.3px;top:628px;font-size:12.5px;color:#3a3f44;transform:translateX(-50%)">1</div>
<div class="t" style="left:253.4px;top:624.5px;font-size:17px;color:#a4a9ae;transform:translateX(-50%)">&laquo;</div>
<div class="t" style="left:283.8px;top:624.5px;font-size:17px;color:#a4a9ae;transform:translateX(-50%)">&lsaquo;</div>
<div class="t" style="left:342.8px;top:624.5px;font-size:17px;color:#a4a9ae;transform:translateX(-50%)">&rsaquo;</div>
<div class="t" style="left:373.2px;top:624.5px;font-size:17px;color:#a4a9ae;transform:translateX(-50%)">&raquo;</div>
<div class="t" style="left:1560px;top:627px;font-size:12.3px;color:#495057;transform:translateX(-100%)">1 of 1 pages (7 items)</div>
<svg class="a" style="left:0;top:0" width="1600" height="737" viewBox="0 0 1600 737">
<defs><filter id="sh" x="-20%" y="-20%" width="140%" height="140%"><feGaussianBlur in="SourceAlpha" stdDeviation="2.2"/><feOffset dx="1.5" dy="2.5"/><feComponentTransfer><feFuncA type="linear" slope="0.55"/></feComponentTransfer><feMerge><feMergeNode/><feMergeNode in="SourceGraphic"/></feMerge></filter></defs>
<g filter="url(#sh)" fill="#f5a60b">
<path d="M1166 457.5 L1306 391" stroke="#f5a60b" stroke-width="10" stroke-linecap="round"/>
<path d="M1299 378 L1331 378 L1311 405Z"/>
<path d="M1397 418 L1449 388" stroke="#f5a60b" stroke-width="10" stroke-linecap="round"/>
<path d="M1440 375.5 L1473 374 L1455 400.5Z"/>
</g></svg>
<!--/GRID-->
</div>

</body></html>
